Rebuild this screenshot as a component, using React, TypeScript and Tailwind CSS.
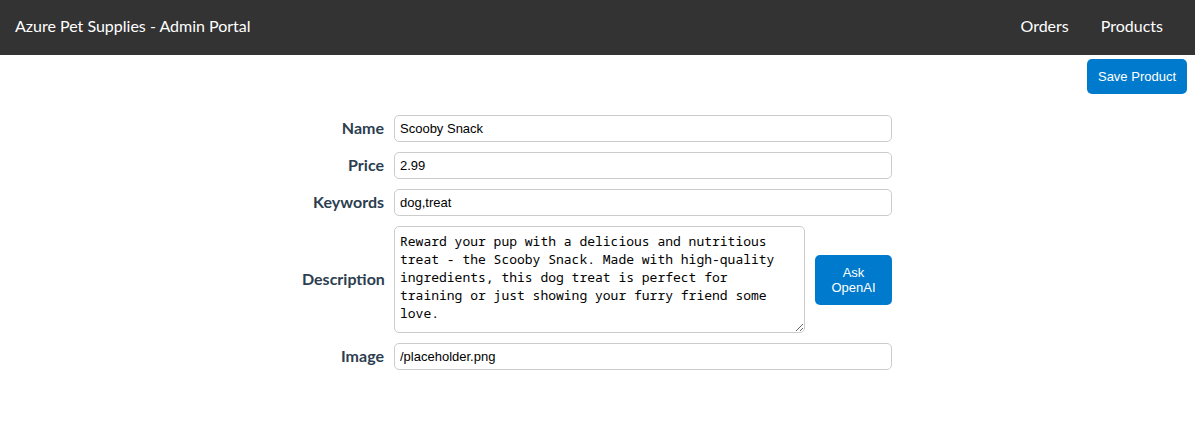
import { useState } from "react";

const fieldStyle =
  "w-full rounded-[5px] border border-[#cccccc] bg-white pl-[5px] text-[13px] text-black";
const inputStyle = `${fieldStyle} h-[27px] pr-[5px] font-['Liberation_Sans',Arial,sans-serif]`;
const labelStyle = "pb-[2px] text-right font-bold leading-[22px]";
const buttonStyle =
  "shrink-0 cursor-pointer rounded-[5px] bg-[#007acc] text-center font-['Liberation_Sans',Arial,sans-serif] text-[13px] leading-[15px] text-white";

export default function App() {
  const [product, setProduct] = useState({
    name: "Scooby Snack",
    price: "2.99",
    keywords: "dog,treat",
    description:
      "Reward your pup with a delicious and nutritious treat - the Scooby Snack. Made with high-quality ingredients, this dog treat is perfect for training or just showing your furry friend some love.",
    image: "/placeholder.png",
  });

  const update = (key: keyof typeof product, value: string) =>
    setProduct({ ...product, [key]: value });

  return (
    <div className="min-h-screen bg-white font-[Avenir,Lato,sans-serif] text-base text-[#2c3e50]">
      <header className="flex h-[55px] items-center justify-between bg-[#333333] pr-8 pb-[4px] pl-[15px] text-white">
        <span>Azure Pet Supplies - Admin Portal</span>
        <nav className="flex gap-8">
          <a href="#orders">Orders</a>
          <a href="#products">Products</a>
        </nav>
      </header>

      <main>
        <div className="flex justify-end px-2 pt-1">
          <button type="button" className={`${buttonStyle} h-[35px] w-[100px]`}>
            Save Product
          </button>
        </div>

        <form className="mx-auto mt-[21px] grid max-w-[591px] grid-cols-[82px_1fr] items-center gap-[10px] pr-px">
          <label htmlFor="name" className={labelStyle}>Name</label>
          <input id="name" className={inputStyle} value={product.name} onChange={(e) => update("name", e.target.value)} />

          <label htmlFor="price" className={labelStyle}>Price</label>
          <input id="price" className={inputStyle} value={product.price} onChange={(e) => update("price", e.target.value)} />

          <label htmlFor="keywords" className={labelStyle}>Keywords</label>
          <input id="keywords" className={inputStyle} value={product.keywords} onChange={(e) => update("keywords", e.target.value)} />

          <label htmlFor="description" className={labelStyle}>Description</label>
          <div className="flex items-center gap-[10px]">
            <textarea
              id="description"
              rows={5}
              className={`${fieldStyle} h-[107px] min-w-0 flex-1 resize py-[5px] pr-[15px] font-['Noto_Sans_Mono','DejaVu_Sans_Mono',monospace] leading-[18px]`}
              value={product.description}
              onChange={(e) => update("description", e.target.value)}
            />
            <button type="button" className={`${buttonStyle} w-[77px] p-[10px]`}>
              Ask OpenAI
            </button>
          </div>

          <label htmlFor="image" className={labelStyle}>Image</label>
          <input id="image" className={inputStyle} value={product.image} onChange={(e) => update("image", e.target.value)} />
        </form>
      </main>
    </div>
  );
}
